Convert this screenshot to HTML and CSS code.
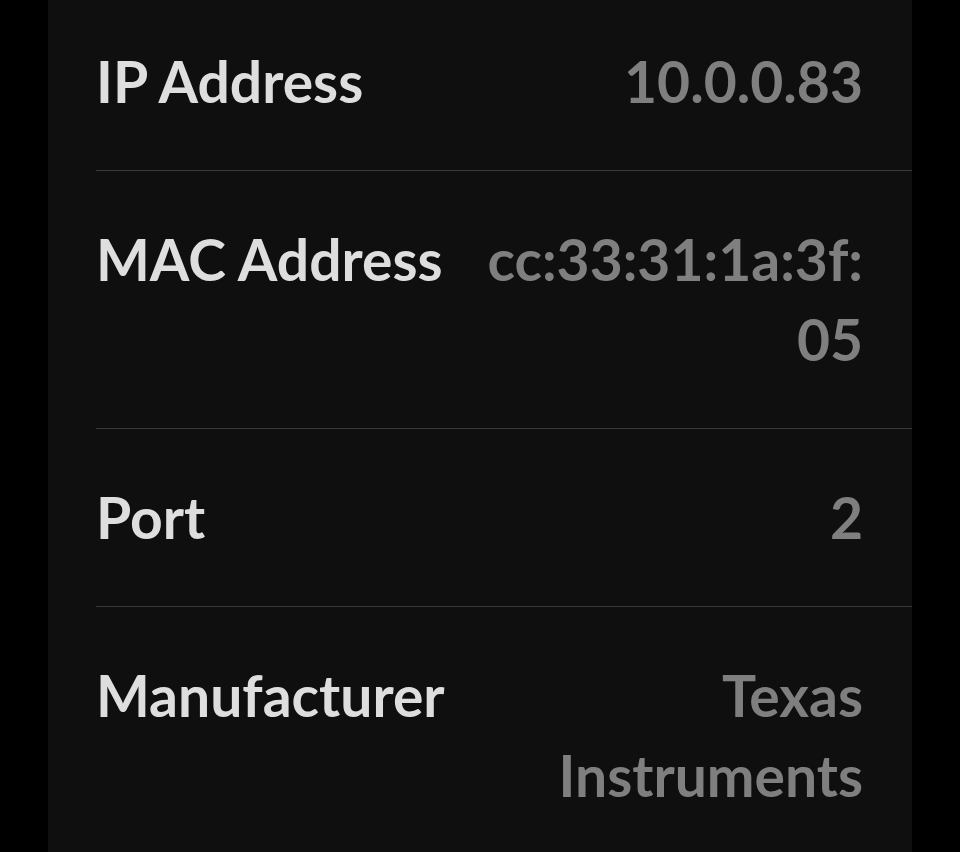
FILE: index.html
```html
<!DOCTYPE html>
<html>
<head>
    <title>Device Details</title>
    <link rel="stylesheet" href="styles.css">
</head>
<body>
    <div class="panel">
        <div class="row">
            <span class="label">IP Address</span>
            <span class="value">10.0.0.83</span>
        </div>
        <div class="row">
            <span class="label">MAC Address</span>
            <span class="value">cc:33:31:1a:3f:05</span>
        </div>
        <div class="row">
            <span class="label">Port</span>
            <span class="value">2</span>
        </div>
        <div class="row">
            <span class="label">Manufacturer</span>
            <span class="value">Texas Instruments</span>
        </div>
    </div>
</body>
</html>
```

FILE: styles.css
```css
body {
    margin: 0;
    background-color: #000;
    font-family: Lato, "Noto Sans", sans-serif;
    font-weight: bold;
    font-size: 57px;
    line-height: 80px;
    height: 852px;
    overflow: hidden;
}

.panel {
    width: 864px;
    margin: -7px auto 0;
    padding-left: 48px;
    box-sizing: border-box;
    background-color: #0f0f0f;
    min-height: 900px;
}

.row {
    display: flex;
    gap: 32px;
    padding: 48px 49px 49px 0;
    border-bottom: 1px solid #3a3a3a;
}

.label {
    flex-shrink: 0;
    color: #dedede;
}

.value {
    flex: 1;
    min-width: 0;
    text-align: right;
    color: #7f7f7f;
    overflow-wrap: anywhere;
}
```
